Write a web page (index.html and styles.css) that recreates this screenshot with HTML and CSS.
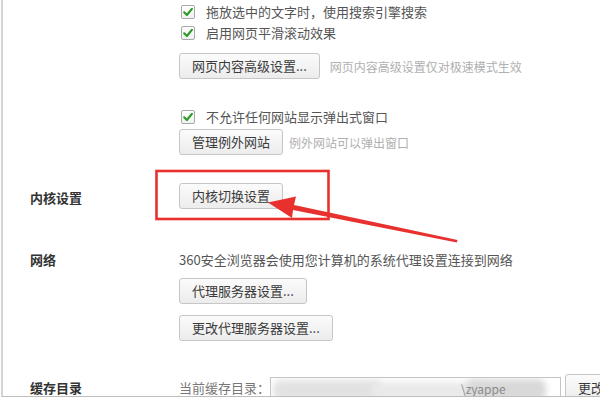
FILE: index.html
```html
<!DOCTYPE html>
<html lang="zh-CN">
<head>
<meta charset="utf-8">
<title>设置</title>
<link rel="stylesheet" href="styles.css">
</head>
<body>
<div class="page">
  <section class="section sec-content">
    <div class="label"></div>
    <div class="body">
      <div class="cb-row"><span class="cb"><svg viewBox="0 0 14 14" width="14" height="14"><path d="M3.2 7.3 L5.9 10 L10.9 3.9" fill="none" stroke="#2f9a2a" stroke-width="2.2" stroke-linecap="round" stroke-linejoin="round"/></svg></span><span>拖放选中的文字时，使用搜索引擎搜索</span></div>
      <div class="cb-row"><span class="cb"><svg viewBox="0 0 14 14" width="14" height="14"><path d="M3.2 7.3 L5.9 10 L10.9 3.9" fill="none" stroke="#2f9a2a" stroke-width="2.2" stroke-linecap="round" stroke-linejoin="round"/></svg></span><span>启用网页平滑滚动效果</span></div>
      <div class="btn-row r-adv"><button class="btn">网页内容高级设置...</button><span class="hint hint-adv">网页内容高级设置仅对极速模式生效</span></div>
      <div class="cb-row r-popup"><span class="cb"><svg viewBox="0 0 14 14" width="14" height="14"><path d="M3.2 7.3 L5.9 10 L10.9 3.9" fill="none" stroke="#2f9a2a" stroke-width="2.2" stroke-linecap="round" stroke-linejoin="round"/></svg></span><span>不允许任何网站显示弹出式窗口</span></div>
      <div class="btn-row r-except"><button class="btn">管理例外网站</button><span class="hint hint-except">例外网站可以弹出窗口</span></div>
    </div>
  </section>

  <section class="section sec-kernel">
    <div class="label lbl-btn">内核设置</div>
    <div class="body">
      <div class="btn-row"><button class="btn">内核切换设置</button></div>
    </div>
  </section>

  <section class="section sec-net">
    <div class="label lbl-text">网络</div>
    <div class="body">
      <div class="desc">360安全浏览器会使用您计算机的系统代理设置连接到网络</div>
      <div class="btn-row r-proxy"><button class="btn">代理服务器设置...</button></div>
      <div class="btn-row r-proxy2"><button class="btn">更改代理服务器设置...</button></div>
    </div>
  </section>

  <section class="section sec-cache">
    <div class="label lbl-cache">缓存目录</div>
    <div class="body cache-body">
      <span class="cache-cap">当前缓存目录：</span>
      <div class="cache-input">
        <div class="smudge s1"></div>
        <div class="smudge s2"></div>
        <div class="smudge s3"></div>
        <span class="cache-path">\zyappe</span>
      </div>
      <button class="btn btn-change">更改</button>
    </div>
  </section>
</div>

<svg class="annot" width="600" height="398" viewBox="0 0 600 398">
  <rect x="156.5" y="171" width="172" height="48" fill="none" stroke="#e8302e" stroke-width="2.6"/>
  <polygon points="268,202.5 296,196.5 294,205 457.5,240 456.8,242.6 293,210 292,218" fill="#e8302e"/>
</svg>
</body>
</html>
```

FILE: styles.css
```css
html, body {
  margin: 0;
  padding: 0;
  background: #ffffff;
}

body {
  width: 600px;
  height: 398px;
  overflow: hidden;
  position: relative;
  font-family: "Noto Sans CJK SC", "Noto Sans", "Liberation Sans", sans-serif;
  font-size: 13px;
  color: #555555;
}

.page {
  margin-left: 1px;
  height: 397px;
  box-sizing: border-box;
  border-left: 2px solid #d4d4d4;
  border-bottom: 1px solid #bdbdbd;
  overflow: hidden;
  padding-top: 1px;
  display: flex;
  flex-direction: column;
}

.section {
  display: flex;
  flex-direction: row;
  align-items: flex-start;
}

.label {
  width: 176px;
  padding-left: 27px;
  box-sizing: border-box;
  flex: none;
  font-weight: bold;
  color: #333333;
  font-size: 13px;
}

.body {
  display: flex;
  flex-direction: column;
  align-items: flex-start;
}

.cb-row {
  height: 21px;
  display: flex;
  align-items: center;
  gap: 11px;
  padding-left: 2px;
  line-height: 21px;
  color: #555555;
}

.cb {
  width: 14px;
  height: 14px;
  box-sizing: border-box;
  border: 1px solid #a9a9a9;
  border-radius: 2px;
  background: linear-gradient(#ffffff, #f1f1f1);
  display: flex;
  align-items: center;
  justify-content: center;
  overflow: hidden;
}

.cb svg {
  display: block;
  flex: none;
}

.btn-row {
  display: flex;
  align-items: center;
}

.btn {
  height: 26px;
  box-sizing: border-box;
  padding: 0 12px;
  border: 1px solid #c6c6c6;
  border-radius: 3px;
  background: linear-gradient(#fbfbfb, #ececec);
  font-family: "Noto Sans CJK SC", "Noto Sans", "Liberation Sans", sans-serif;
  font-size: 13px;
  line-height: 24px;
  color: #3a3a3a;
  white-space: nowrap;
  cursor: default;
}

.hint {
  font-size: 12px;
  color: #b0b0b0;
  white-space: nowrap;
}

.hint-adv { margin-left: 10px; }
.hint-except { margin-left: 6px; }

.r-adv { margin-top: 10px; }
.r-popup { margin-top: 27px; }
.r-except { margin-top: 2px; }

.sec-kernel { margin-top: 28px; }
.lbl-btn {
  line-height: 26px;
  padding-top: 2px;
}

.sec-net { margin-top: 39px; }
.lbl-text { line-height: 20px; }
.desc {
  line-height: 20px;
  white-space: nowrap;
  color: #555555;
}
.r-proxy { margin-top: 8px; }
.r-proxy2 { margin-top: 11px; }

.sec-cache { margin-top: 33px; }
.lbl-cache { line-height: 28px; }

.cache-body {
  flex-direction: row;
  align-items: flex-start;
}

.cache-cap {
  line-height: 28px;
  color: #777777;
  white-space: nowrap;
  width: 91px;
  flex: none;
}

.cache-input {
  margin-top: 3px;
  width: 291px;
  height: 21px;
  box-sizing: border-box;
  border: 1px solid #c4c4c4;
  border-bottom: none;
  background: #ffffff;
  position: relative;
  overflow: hidden;
  flex: none;
}

.smudge {
  position: absolute;
  background: #dcdcdc;
  filter: blur(3px);
  border-radius: 8px;
}

.s1 { left: 2px; top: 2px; width: 110px; height: 20px; background: #e2e2e2; }
.s2 { left: 100px; top: 4px; width: 110px; height: 18px; background: #eaeaea; }
.s3 { left: 195px; top: 1px; width: 80px; height: 22px; background: #d9d9d9; }

.cache-path {
  position: absolute;
  left: 190px;
  top: 4px;
  font-size: 12px;
  line-height: 14px;
  color: #8a8a8a;
  white-space: nowrap;
}

.btn-change {
  margin-left: 4px;
  width: 60px;
  text-align: left;
  height: 28px;
  flex: none;
}

.annot {
  position: absolute;
  left: 0;
  top: 0;
  pointer-events: none;
}
```
